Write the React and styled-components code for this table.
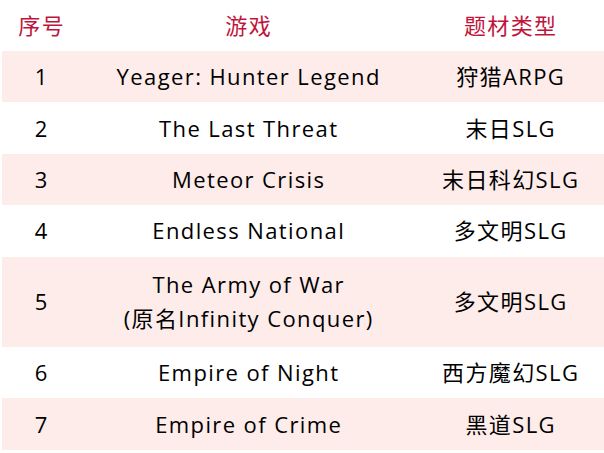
import React from "react";
import styled, { createGlobalStyle } from "styled-components";

const Global = createGlobalStyle`
  html, body { margin: 0; padding: 0; background: #ffffff; }
  body { font-family: "Open Sans", "Noto Sans CJK SC", sans-serif; }
`;

const Table = styled.div`
  margin-left: 2px;
  width: 602px;
  display: grid;
  grid-template-columns: 78px 336px 1fr;
`;

const Row = styled.div`
  display: contents;
`;

const Cell = styled.div`
  display: flex;
  align-items: center;
  justify-content: center;
  text-align: center;
  height: ${(p) => p.$h}px;
  padding: 0 0 1px 1.4px;
  box-sizing: border-box;
  background: ${(p) => (p.$pink ? "#fdecea" : "#ffffff")};
  color: ${(p) => (p.$head ? "#c0143c" : "#000000")};
  font-family: "Open Sans", "Noto Sans CJK SC", sans-serif;
  font-size: 22px;
  letter-spacing: 1.4px;
  line-height: 34px;
  white-space: pre-line;
`;

const rows = [
  ["1", "Yeager: Hunter Legend", "狩猎ARPG"],
  ["2", "The Last Threat", "末日SLG"],
  ["3", "Meteor Crisis", "末日科幻SLG"],
  ["4", "Endless National", "多文明SLG"],
  ["5", "The Army of War\n(原名Infinity Conquer)", "多文明SLG", 90.5],
  ["6", "Empire of Night", "西方魔幻SLG"],
  ["7", "Empire of Crime", "黑道SLG"],
];

export default function App() {
  return (
    <>
      <Global />
      <Table>
        <Row>
          <Cell $head $h={51}>序号</Cell>
          <Cell $head $h={51}>游戏</Cell>
          <Cell $head $h={51}>题材类型</Cell>
        </Row>
        {rows.map(([n, g, t, h], i) => {
          const pink = i % 2 === 0;
          const height = h || 51.4;
          return (
            <Row key={n}>
              <Cell $pink={pink} $h={height}>{n}</Cell>
              <Cell $pink={pink} $h={height}>{g}</Cell>
              <Cell $pink={pink} $h={height}>{t}</Cell>
            </Row>
          );
        })}
      </Table>
    </>
  );
}
